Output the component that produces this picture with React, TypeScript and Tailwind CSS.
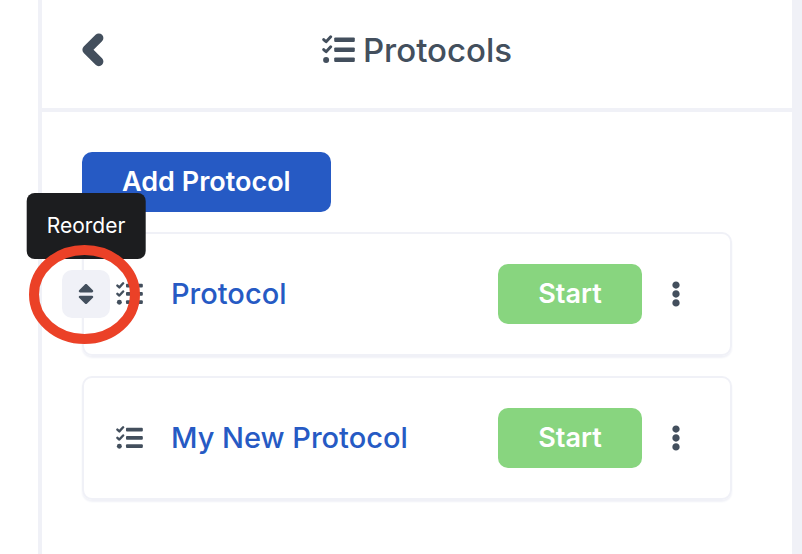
import { FaEllipsisV, FaSort } from 'react-icons/fa';

const protocols = [
  { id: 1, name: 'Protocol' },
  { id: 2, name: 'My New Protocol' },
];

function BackIcon() {
  return (
    <svg aria-hidden="true" width="22" height="34" viewBox="0 0 22 34" fill="none">
      <path
        d="M16.8 5 5 16.8l11.8 11.8"
        stroke="currentColor"
        strokeWidth="9.2"
        strokeLinecap="round"
        strokeLinejoin="round"
      />
    </svg>
  );
}

function ChecklistIcon({ size }: { size: number }) {
  return (
    <svg aria-hidden="true" width={size} height={size} viewBox="0 0 33 33" className="shrink-0">
      <path
        d="M1.7 5.6 4.1 7.8 8.7 2.8M1.7 15.6l2.4 2.2 4.6-5"
        fill="none"
        stroke="currentColor"
        strokeWidth="2.9"
        strokeLinecap="round"
        strokeLinejoin="round"
      />
      <g fill="currentColor">
        <circle cx="4.1" cy="26" r="3" />
        <rect x="12.2" y="3.4" width="20.6" height="4.6" rx="1.2" />
        <rect x="12.2" y="13.4" width="20.6" height="4.6" rx="1.2" />
        <rect x="12.2" y="23.4" width="20.6" height="4.6" rx="1.2" />
      </g>
    </svg>
  );
}

function ReorderHandle() {
  return (
    <div className="absolute top-9 -left-[22px]">
      <button
        type="button"
        aria-label="Reorder"
        aria-describedby="reorder-tip"
        className="flex size-12 items-center justify-center rounded-[10px] bg-[#f0f1f7]"
      >
        <FaSort size={26} />
      </button>
      <div
        id="reorder-tip"
        role="tooltip"
        className="absolute bottom-[59px] left-1/2 -translate-x-1/2 rounded-lg bg-[#1c1d1f] px-5 py-[18px] text-[21px] leading-[30px] text-white"
      >
        Reorder
      </div>
      <svg
        aria-hidden="true"
        className="pointer-events-none absolute -top-[25px] -left-[33px] max-w-none"
        width="111"
        height="99"
        viewBox="0 0 111 99"
        fill="none"
      >
        <ellipse cx="55.5" cy="49.5" rx="50.5" ry="44.5" stroke="#eb4127" strokeWidth="10" />
      </svg>
    </div>
  );
}

export default function App() {
  return (
    <div className="min-h-screen bg-white pl-[38px] font-['Inter',sans-serif] text-[#434f5d]">
      <div className="min-h-screen border-r-[10px] border-l-4 border-[#f0f1f7]">
        <header className="grid grid-cols-[1fr_auto_1fr] items-center border-b-4 border-[#f0f1f7] px-10 pt-6 pb-8">
          <button type="button" aria-label="Back" className="justify-self-start">
            <BackIcon />
          </button>
          <h1 className="flex items-center gap-2 text-[33px] leading-[52px] font-medium">
            <ChecklistIcon size={33} />
            Protocols
          </h1>
        </header>

        <main className="flex flex-col items-start gap-5 py-10 pr-[60px] pl-10">
          <button
            type="button"
            className="h-[60px] rounded-[10px] bg-[#265ac4] px-10 text-[27px] font-semibold text-white"
          >
            Add Protocol
          </button>

          <ul className="flex w-full flex-col gap-5">
            {protocols.map((protocol, index) => (
              <li
                key={protocol.id}
                className="relative flex items-center rounded-[10px] border-2 border-[#f0f1f7] py-[30px] pr-10 pl-8 shadow-[0_2px_2px_#f0f1f7]"
              >
                {index === 0 && <ReorderHandle />}
                <ChecklistIcon size={27} />
                <a href="#" className="ml-7 flex-1 text-[29px] font-medium text-[#265ac4]">
                  {protocol.name}
                </a>
                <button
                  type="button"
                  className="h-[60px] w-36 rounded-[10px] bg-[#88d57f] text-[27px] font-semibold text-white"
                >
                  Start
                </button>
                <button type="button" aria-label="More options" className="ml-5 flex w-7 justify-center">
                  <FaEllipsisV size={26} />
                </button>
              </li>
            ))}
          </ul>
        </main>
      </div>
    </div>
  );
}
